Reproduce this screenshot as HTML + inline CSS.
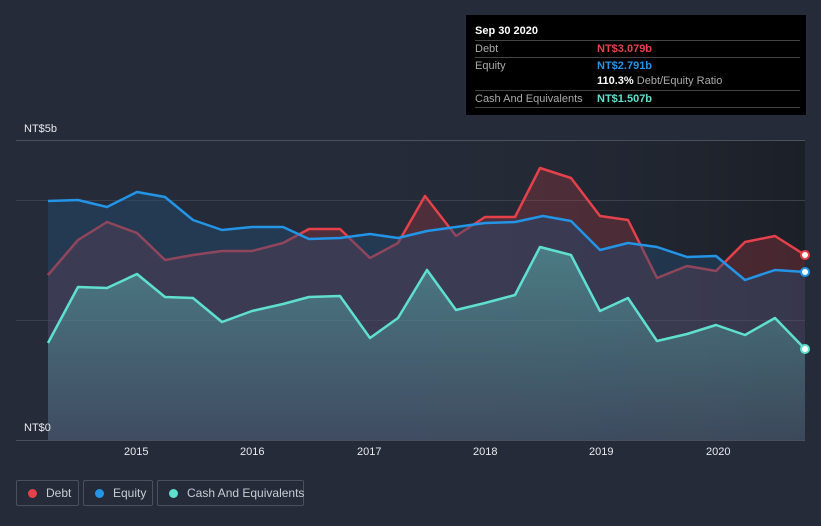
<!DOCTYPE html>
<html><head><style>
body{margin:0;width:821px;height:526px;background:#252b38;font-family:"Liberation Sans",sans-serif;overflow:hidden;position:relative}
.tt{position:absolute;left:466px;top:15px;width:340px;height:100px;background:#000;color:#fff;font-size:11px}
.tt .h{position:absolute;left:9px;top:10px;font-weight:bold}
.row{position:absolute;left:9px;width:325px;border-top:1px solid #444;height:16px;line-height:16px}
.row .l{color:#aaa;position:absolute;left:0}
.row .v{position:absolute;left:122px;font-weight:bold}
.leg{position:absolute;top:480px;height:26px;border:1px solid #4a505c;border-radius:2px;color:#c8ccd4;font-size:12px;line-height:25px;box-sizing:border-box;white-space:nowrap}
.leg i{display:inline-block;width:9px;height:9px;border-radius:50%;margin:0 9px 0 11px;vertical-align:-1px}
.ax{position:absolute;color:#e8eaee;font-size:11px}
</style></head><body>
<svg width="821" height="526" style="position:absolute;left:0;top:0">
<defs>
<linearGradient id="bgg" x1="0" x2="1" y1="0" y2="0"><stop offset="0.4" stop-color="#252b38" stop-opacity="0"/><stop offset="1" stop-color="#1b1f27"/></linearGradient>
<linearGradient id="cg" x1="0" x2="0" y1="0" y2="1"><stop offset="0" stop-color="#5fc9c0" stop-opacity="0.45"/><stop offset="1" stop-color="#5fc9c0" stop-opacity="0.12"/></linearGradient>
</defs>
<rect x="16" y="140" width="789" height="300" fill="url(#bgg)"/>
<line x1="16" y1="140.5" x2="805" y2="140.5" stroke="#4a505c"/>
<line x1="16" y1="200.5" x2="805" y2="200.5" stroke="#3a404c"/>
<line x1="16" y1="320.5" x2="805" y2="320.5" stroke="#3a404c"/>
<line x1="16" y1="440.5" x2="805" y2="440.5" stroke="#4a505c"/>
<path d="M48,440 L48,275 L78,240 L107,222 L137,233 L165,260 L193,255 L222,251 L252,251 L283,243 L309,229 L340,229 L370,258 L398,243 L425,196 L456,236 L485,217 L515,217 L540,168 L571,178 L600,216 L628,220 L657,278 L687,266 L716,271 L745,242 L775,236 L805,255 L805,440Z" fill="#e5414b" fill-opacity="0.22"/>
<polyline points="48,275 78,240 107,222 137,233 165,260 193,255 222,251 252,251 283,243 309,229 340,229 370,258 398,243 425,196 456,236 485,217 515,217 540,168 571,178 600,216 628,220 657,278 687,266 716,271 745,242 775,236 805,255" fill="none" stroke="#e5414b" stroke-width="2.5" stroke-linejoin="round"/>
<path d="M48,440 L48,201 L78,200 L107,207 L137,192 L165,197 L193,220 L222,230 L252,227 L283,227 L309,239 L340,238 L370,234 L398,238 L427,231 L456,227 L485,223 L515,222 L543,216 L571,221 L600,250 L628,243 L657,247 L687,257 L716,256 L745,280 L775,270 L805,272 L805,440Z" fill="#2196f3" fill-opacity="0.2"/>
<path d="M48,440 L48,201 L78,200 L107,207 L137,192 L165,197 L193,220 L222,230 L252,227 L283,227 L309,239 L340,238 L370,234 L398,238 L427,231 L456,227 L485,223 L515,222 L543,216 L571,221 L600,250 L628,243 L657,247 L687,257 L716,256 L745,280 L775,270 L805,272 L805,440Z" fill="#252b38" fill-opacity="0.3"/>
<polyline points="48,201 78,200 107,207 137,192 165,197 193,220 222,230 252,227 283,227 309,239 340,238 370,234 398,238 427,231 456,227 485,223 515,222 543,216 571,221 600,250 628,243 657,247 687,257 716,256 745,280 775,270 805,272" fill="none" stroke="#2394e6" stroke-width="2.5" stroke-linejoin="round"/>
<path d="M48,440 L48,343 L78,287 L107,288 L137,274 L165,297 L193,298 L222,322 L252,311 L283,304 L309,297 L340,296 L370,338 L398,318 L427,270 L456,310 L485,303 L515,295 L540,247 L571,255 L600,311 L628,298 L657,341 L687,334 L716,325 L745,335 L775,318 L805,349 L805,440Z" fill="url(#cg)"/>
<polyline points="48,343 78,287 107,288 137,274 165,297 193,298 222,322 252,311 283,304 309,297 340,296 370,338 398,318 427,270 456,310 485,303 515,295 540,247 571,255 600,311 628,298 657,341 687,334 716,325 745,335 775,318 805,349" fill="none" stroke="#5fe0cf" stroke-width="2.5" stroke-linejoin="round"/>
<circle cx="805" cy="255" r="4" fill="#fff" stroke="#e5414b" stroke-width="2"/>
<circle cx="805" cy="272" r="4" fill="#fff" stroke="#2394e6" stroke-width="2"/>
<circle cx="805" cy="349" r="4" fill="#fff" stroke="#5fe0cf" stroke-width="2"/>
</svg>
<div class="ax" style="left:24px;top:123px">NT$5b</div>
<div class="ax" style="left:24px;top:422px">NT$0</div>
<div class="ax" style="left:124px;top:446px">2015</div>
<div class="ax" style="left:240px;top:446px">2016</div>
<div class="ax" style="left:357px;top:446px">2017</div>
<div class="ax" style="left:473px;top:446px">2018</div>
<div class="ax" style="left:589px;top:446px">2019</div>
<div class="ax" style="left:706px;top:446px">2020</div>
<div class="tt">
<div class="h">Sep 30 2020</div>
<div class="row" style="top:25px"><span class="l">Debt</span><span class="v" style="color:#e5414b">NT$3.079b</span></div>
<div class="row" style="top:42px"><span class="l">Equity</span><span class="v" style="color:#2394e6">NT$2.791b</span></div>
<div class="row" style="top:58px;border-top:none"><span class="v" style="color:#fff">110.3% <span style="color:#aaa;font-weight:normal">Debt/Equity Ratio</span></span></div>
<div class="row" style="top:75px;border-bottom:1px solid #444"><span class="l">Cash And Equivalents</span><span class="v" style="color:#5fe0cf">NT$1.507b</span></div>
</div>
<div class="leg" style="left:16px;width:63px"><i style="background:#e5414b"></i>Debt</div>
<div class="leg" style="left:83px;width:70px"><i style="background:#2394e6"></i>Equity</div>
<div class="leg" style="left:157px;width:147px"><i style="background:#5fe0cf"></i>Cash And Equivalents</div>
</body></html>
